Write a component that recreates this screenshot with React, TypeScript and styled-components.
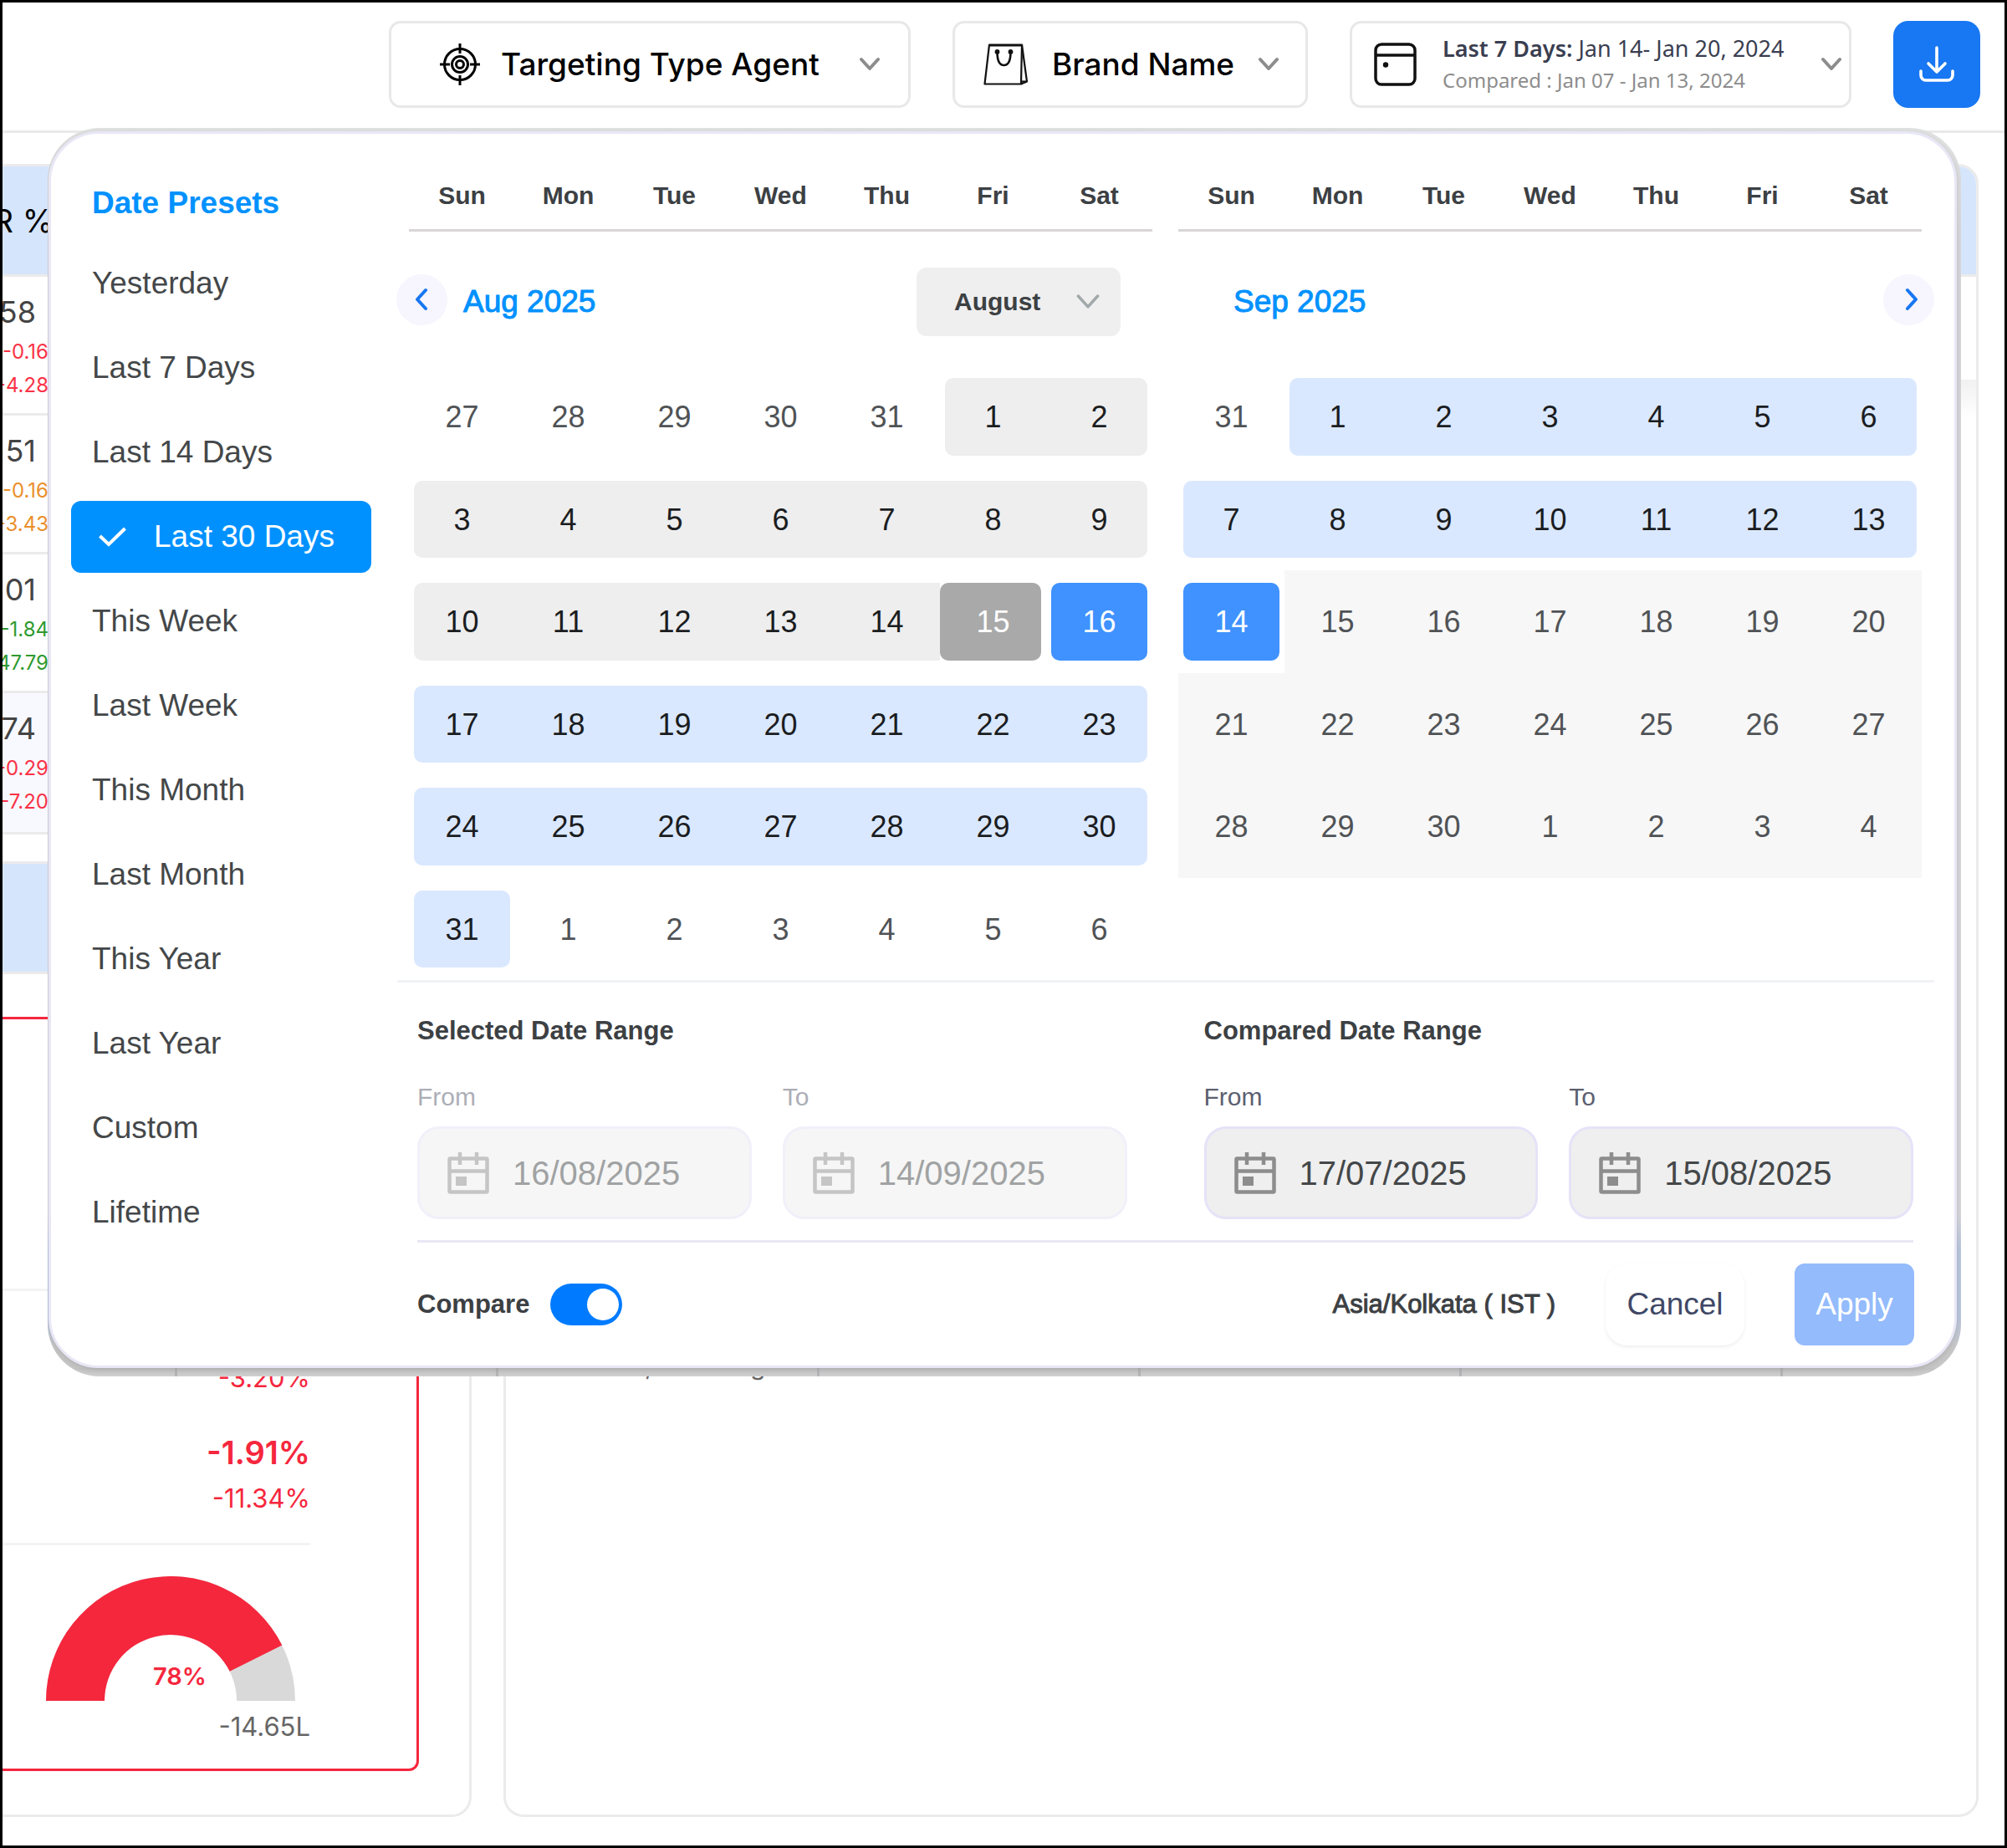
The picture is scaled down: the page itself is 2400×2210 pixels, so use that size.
import React, { useState } from 'react';
import styled, { createGlobalStyle, css } from 'styled-components';

const helvetica = `"Liberation Sans", Arial, sans-serif`;
const inter = `Inter, "Liberation Sans", sans-serif`;
const noto = `"Noto Sans", "Open Sans", sans-serif`;

const GlobalStyle = createGlobalStyle`
  *, *::before, *::after { box-sizing: border-box; }
  body { margin: 0; background: #fff; font-family: ${inter}; }
  button, input, select { font: inherit; color: inherit; margin: 0; padding: 0; border: 0; background: none; }
  button, select, input { outline-offset: 2px; }
  h2, h3, p, ul { margin: 0; padding: 0; list-style: none; }
  svg { display: block; flex: none; }
`;

const Page = styled.div`
  position: relative;
  display: flex;
  flex-direction: column;
  min-height: 100vh;
  border: 3px solid #000;
  background: #fff;
  overflow: hidden;
`;

/* ---------- top bar ---------- */

const TopBar = styled.header`
  display: flex;
  justify-content: flex-end;
  gap: 50px;
  padding: 22px 29px 27px;
  border-bottom: 3px solid #e9e9e9;
`;

const Picker = styled.button<{ $width: number; $left: number; $right: number; $gap: number }>`
  display: flex;
  align-items: center;
  gap: ${(p) => p.$gap}px;
  width: ${(p) => p.$width}px;
  height: 104px;
  padding: 0 ${(p) => p.$right}px 0 ${(p) => p.$left}px;
  border: 3px solid #e8e8e8;
  border-radius: 14px;
  background: #fff;
  color: #000;
  font: 500 37px/44px ${inter};
  text-align: left;
  white-space: nowrap;

  > :last-child {
    margin-left: auto;
  }
`;

const PeriodText = styled.span`
  display: flex;
  flex-direction: column;
  gap: 2px;
  font: 400 27px/36px ${noto};
  color: #3a3e50;

  strong {
    font-weight: 600;
  }
  small {
    font-size: 24px;
    color: #8d8d8d;
  }
`;

const DownloadButton = styled.button`
  display: grid;
  place-items: center;
  width: 104px;
  height: 104px;
  border-radius: 18px;
  background: #1877f2;
  color: #fff;
`;

/* ---------- dashboard behind the popup ---------- */

const Dashboard = styled.main`
  flex: 1;
  display: grid;
  grid-template-columns: 561px 1fr;
  gap: 38px;
  padding: 37px 31px 34px 0;
`;

const LeftColumn = styled.div`
  display: flex;
  flex-direction: column;
  gap: 32px;
`;

const Card = styled.section<{ $bleed?: boolean; $grow?: boolean }>`
  display: flex;
  flex-direction: column;
  flex-grow: ${(p) => (p.$grow ? 1 : 0)};
  border: 3px solid #ebebeb;
  border-radius: 24px;
  overflow: hidden;
  ${(p) =>
    p.$bleed &&
    css`
      border-left: 0;
      border-top-left-radius: 0;
      border-bottom-left-radius: 0;
    `}
`;

const CardHead = styled.div`
  display: flex;
  align-items: center;
  height: 132px;
  background: #d5e5fc;
  border-bottom: 3px solid #ebebeb;
  font: 400 38px/44px ${inter};
  color: #000;
`;

const HeadLabel = styled.span`
  display: flex;
  justify-content: flex-end;
  width: 61px;
  white-space: nowrap;
`;

const MetricRow = styled.div<{ $shade?: boolean }>`
  height: 166px;
  padding-top: 20px;
  background: ${(p) => (p.$shade ? '#f8f9ff' : '#fff')};
  border-bottom: 3px solid #ebebeb;

  &:last-child {
    border-bottom: 0;
  }
`;

const Metric = styled.div<{ $tone: string }>`
  display: flex;
  flex-direction: column;
  align-items: flex-end;
  width: 55px;
  font: 400 24px/40px ${inter};
  color: ${(p) => p.$tone};

  strong {
    margin-bottom: 6px;
    padding-right: 15px;
    font-weight: 400;
    font-size: 36px;
    line-height: 44px;
    color: #444;
  }
`;

const AlertBox = styled.div`
  flex: 1;
  display: flex;
  flex-direction: column;
  justify-content: flex-end;
  align-items: flex-end;
  margin: 51px 60px 52px 0;
  padding: 0 127px 30px 0;
  border: 3px solid #f5273d;
  border-left: 0;
  border-radius: 0 12px 12px 0;
`;

const Rule = styled.hr<{ $top?: number }>`
  align-self: stretch;
  margin: ${(p) => p.$top ?? 0}px 0 0;
  border: 0;
  border-top: 3px solid #f3f3f3;
`;

const Change = styled.p<{ $size: number; $weight?: number; $tone?: string; $top: number }>`
  margin-top: ${(p) => p.$top}px;
  font: ${(p) => p.$weight ?? 400} ${(p) => p.$size}px/40px ${inter};
  color: ${(p) => p.$tone ?? '#f5273d'};
`;

const GaugeWrap = styled.div`
  margin: 37px 18px 0 0;
`;

const SectionShade = styled.div`
  height: 46px;
  margin-top: 123px;
  background: linear-gradient(#f1f1f1, #fff);
`;

const CardNote = styled.p`
  margin-top: 1113px;
  padding-left: 166px;
  font: 400 30px/40px ${inter};
  color: #666;
`;

/* ---------- popup ---------- */

const Popup = styled.div`
  position: absolute;
  top: 150px;
  left: 54px;
  right: 52px;
  padding: 4px 5px 10px 1px;
  border-radius: 62px;
  overflow: hidden;
  background:
    linear-gradient(90deg, transparent 152px, #b5b5b8 152px, #b5b5b8 155px, transparent 155px) 0 100% / 384px 10px
      repeat-x,
    linear-gradient(#c2c2c2, #cfcfcf) 0 100% / 100% 10px no-repeat,
    linear-gradient(#e0e1e1, #d6d6da 140px, #d6d6da 1300px, #b9c6dd 1340px, #b9c6dd 1420px, #c6c6c6 1460px);
`;

const Panel = styled.div`
  display: flex;
  gap: 31px;
  padding: 0 24px 24px 24px;
  border: 3px solid #e9e7f6;
  border-radius: 60px;
  background: #fff;
  box-shadow: 0 2px 6px rgba(0, 0, 0, 0.12);
  font-family: ${helvetica};
  color: #444749;
`;

const Presets = styled.nav`
  width: 359px;
  flex: none;
  padding-top: 61px;

  h2 {
    padding-left: 25px;
    margin-bottom: 31px;
    font-size: 37px;
    line-height: 44px;
    font-weight: 700;
    color: #0091ff;
  }
  ul {
    display: flex;
    flex-direction: column;
    gap: 15px;
  }
`;

const PresetButton = styled.button<{ $active: boolean }>`
  display: flex;
  align-items: center;
  gap: 33px;
  width: 100%;
  height: 86px;
  padding-left: ${(p) => (p.$active ? 33 : 25)}px;
  border-radius: 12px;
  background: ${(p) => (p.$active ? '#0091ff' : 'transparent')};
  color: ${(p) => (p.$active ? '#fff' : '#444749')};
  font-size: 37px;
  line-height: 44px;
`;

const Content = styled.div`
  flex: 1;
  min-width: 0;
`;

const Months = styled.div`
  display: flex;
  gap: 31px;
  padding: 0 15px 0 14px;
  border-bottom: 3px solid #f1f2f7;
`;

const Month = styled.section`
  flex: 1;
`;

const Weekdays = styled.div`
  display: grid;
  grid-template-columns: repeat(7, 1fr);
  padding: 54px 0 20px;
  border-bottom: 3px solid #d9d6d8;
  font-size: 30px;
  line-height: 40px;
  font-weight: 700;
  text-align: center;
  color: #3c4043;
`;

const MonthBar = styled.div<{ $lead: number; $trail: number }>`
  display: flex;
  align-items: center;
  gap: 19px;
  height: 160px;
  margin: 0 -15px;
  padding: 8px ${(p) => p.$trail}px 0 ${(p) => p.$lead}px;

  h3 {
    font-size: 37px;
    line-height: 44px;
    font-weight: 400;
    color: #0091ff;
    -webkit-text-stroke: 1px #0091ff;
  }
  > :last-child {
    margin-left: auto;
  }
`;

const RoundButton = styled.button`
  display: grid;
  place-items: center;
  width: 61px;
  height: 61px;
  margin-bottom: 6px;
  border-radius: 50%;
  background: #f7f5fd;
  color: #1877f2;
`;

const SelectWrap = styled.label`
  display: grid;
  align-items: center;

  > * {
    grid-area: 1 / 1;
  }
  svg {
    justify-self: end;
    margin-right: 25px;
    pointer-events: none;
  }
`;

const MonthSelect = styled.select`
  appearance: none;
  width: 244px;
  height: 82px;
  padding-left: 45px;
  border-radius: 12px;
  background: #efefef;
  color: #3c4043;
  font: 700 30px/40px ${helvetica};
`;

const DayGrid = styled.div`
  display: grid;
  grid-template-columns: repeat(7, 1fr);
  grid-template-rows: repeat(6, 1fr);
  height: 735px;
`;

type Tone = 'plain' | 'muted' | 'compare' | 'compareEnd' | 'range' | 'edge';

const DayCell = styled.div<{ $muted: boolean }>`
  display: flex;
  padding: 15px 0;
  background: ${(p) => (p.$muted ? '#f7f7f7' : 'transparent')};
`;

const toneColor: Record<Tone, string> = {
  plain: 'transparent',
  muted: 'transparent',
  compare: '#eeeeee',
  compareEnd: '#a9a9a9',
  range: '#dae8ff',
  edge: '#3f92ff',
};

const DayButton = styled.button<{ $tone: Tone; $start: boolean; $end: boolean }>`
  flex: 1;
  margin-left: ${(p) => (p.$start ? 6 : 0)}px;
  margin-right: ${(p) => (p.$end ? 6 : 0)}px;
  padding-top: 2px;
  padding-left: ${(p) => (p.$end && !p.$start ? 6 : 0)}px;
  padding-right: ${(p) => (p.$start && !p.$end ? 6 : 0)}px;
  border-radius: ${(p) => {
    const l = p.$start || p.$tone === 'compareEnd' ? 10 : 0;
    const r = p.$end ? 10 : 0;
    return `${l}px ${r}px ${r}px ${l}px`;
  }};
  background: ${(p) => toneColor[p.$tone]};
  color: ${(p) =>
    p.$tone === 'edge' || p.$tone === 'compareEnd'
      ? '#fff'
      : p.$tone === 'compare' || p.$tone === 'range'
        ? '#1b1d1f'
        : '#505356'};
  font-size: 36px;
  line-height: 44px;
`;

const Ranges = styled.div`
  display: flex;
  gap: 92px;
  margin: 0 25px 0 24px;
  padding: 38px 0 25px;
  border-bottom: 3px solid #e8e7f5;
`;

const RangeGroup = styled.fieldset<{ $disabled?: boolean }>`
  flex: 1;
  min-width: 0;
  margin: 0;
  padding: 0;
  border: 0;

  h3 {
    margin-bottom: 41px;
    font-size: 31px;
    line-height: 40px;
    font-weight: 700;
    color: #3c4043;
  }
  > div {
    display: grid;
    grid-template-columns: 400fr 412fr;
    gap: 37px;
    opacity: ${(p) => (p.$disabled ? 0.5 : 1)};
  }
`;

const Field = styled.label`
  display: flex;
  flex-direction: column;
  gap: 17px;
  min-width: 0;
  font-size: 30px;
  line-height: 36px;
  color: #5c6070;
`;

const DateBox = styled.span`
  display: flex;
  align-items: center;
  gap: 28px;
  height: 111px;
  padding: 0 24px 0 33px;
  border: 3px solid #e5e3f7;
  border-radius: 26px;
  background: #efefef;
  color: #8d8d8d;

  input {
    flex: 1;
    min-width: 0;
    font-size: 40px;
    line-height: 44px;
    color: #444749;
  }
`;

const Footer = styled.div`
  display: flex;
  align-items: center;
  gap: 60px;
  height: 123px;
  margin: 0 24px;
  padding-top: 25px;
`;

const CompareLabel = styled.label`
  display: flex;
  align-items: center;
  gap: 25px;
  margin-right: auto;
  font-size: 31px;
  line-height: 40px;
  font-weight: 700;
  color: #3c4043;
`;

const Toggle = styled.input`
  appearance: none;
  display: flex;
  align-items: center;
  width: 86px;
  height: 50px;
  padding: 0 4px;
  border-radius: 25px;
  background: #c8c8c8;

  &::before {
    content: '';
    width: 38px;
    height: 38px;
    border-radius: 50%;
    background: #fff;
  }
  &:checked {
    justify-content: flex-end;
    background: #007bff;
  }
`;

const Zone = styled.span`
  font-size: 31px;
  line-height: 40px;
  color: #3c4043;
  -webkit-text-stroke: 1px #3c4043;
`;

const ActionButton = styled.button<{ $primary?: boolean }>`
  width: ${(p) => (p.$primary ? 143 : 166)}px;
  height: 98px;
  border-radius: ${(p) => (p.$primary ? 12 : 26)}px;
  background: ${(p) => (p.$primary ? '#94bbfc' : '#fff')};
  color: ${(p) => (p.$primary ? '#fff' : '#3f4866')};
  box-shadow: ${(p) => (p.$primary ? 'none' : '0 2px 4px rgba(0, 0, 0, 0.07)')};
  font-size: 37px;
  line-height: 44px;
`;

/* ---------- icons ---------- */

const Chevron = ({ size = 24, color = '#8c8c8c', stroke = 4 }: { size?: number; color?: string; stroke?: number }) => (
  <svg width={size} height={size} viewBox="0 0 24 24" fill="none" stroke={color} strokeWidth={stroke} strokeLinecap="round" strokeLinejoin="round" aria-hidden="true">
    <path d="M2 6 12 17 22 6" />
  </svg>
);

const TargetIcon = () => (
  <svg width="48" height="50" viewBox="0 0 48 50" fill="none" stroke="#000" strokeWidth="3" aria-hidden="true">
    <circle cx="24" cy="25" r="18.5" />
    <circle cx="24" cy="25" r="9.5" />
    <circle cx="24" cy="25" r="4.5" />
    <path d="M24 0v12M24 38v12M0 25h12M36 25h12" />
  </svg>
);

const BagIcon = () => (
  <svg width="53" height="50" viewBox="0 0 53 50" fill="none" stroke="#111" strokeWidth="2.2" strokeLinejoin="round" aria-hidden="true">
    <path d="M7 1.5h39L45 48.5H1.5Z" />
    <path d="M46 1.5 52 45.5 45 48.5M7 2.5h38" />
    <path d="M45 45.5h6" />
    <path d="M16.500 10c0 10 2 16 8 16s8-6 8-16" strokeWidth="2.6" />
    <circle cx="16.5" cy="10" r="1.8" fill="#111" />
    <circle cx="32.5" cy="10" r="1.8" fill="#111" />
  </svg>
);

const PeriodIcon = () => (
  <svg width="51" height="52" viewBox="0 0 51 52" fill="none" stroke="#111" strokeWidth="3.5" aria-hidden="true">
    <rect x="2" y="2" width="47" height="48" rx="7" />
    <path d="M2 15h47" />
    <circle cx="14" cy="26.5" r="3.2" fill="#111" stroke="none" />
  </svg>
);

const DownloadIcon = () => (
  <svg width="42" height="44" viewBox="0 0 42 44" fill="none" stroke="#fff" strokeWidth="3.6" strokeLinecap="round" strokeLinejoin="round" aria-hidden="true">
    <path d="M21 2v29M11 21l10 10 10-10" />
    <path d="M2 30v5a6 6 0 0 0 6 6h26a6 6 0 0 0 6-6v-5" />
  </svg>
);

const CheckIcon = () => (
  <svg width="33" height="24" viewBox="0 0 33 24" fill="none" stroke="#fff" strokeWidth="4" aria-hidden="true">
    <path d="M1.5 11 12 21 31.5 2" />
  </svg>
);

const AngleIcon = ({ next }: { next?: boolean }) => (
  <svg width="22" height="28" viewBox="0 0 22 28" fill="none" stroke="#1877f2" strokeWidth="4" strokeLinecap="round" strokeLinejoin="round" aria-hidden="true">
    <path d={next ? 'M9 3l10 11L9 25' : 'M15 3 5 14l10 11'} />
  </svg>
);

const CalendarIcon = () => (
  <svg width="50" height="50" viewBox="0 0 50 50" fill="none" stroke="currentColor" strokeWidth="4.5" aria-hidden="true">
    <rect x="2.5" y="7.5" width="45" height="40" rx="1" />
    <path d="M2.5 22.5h45M15 0v15M35 0v15" />
    <rect x="10" y="29" width="13" height="11" fill="currentColor" stroke="none" />
  </svg>
);

const Gauge = () => (
  <svg width="298" height="149" viewBox="0 0 298 149" role="img" aria-label="78%">
    <path d="M0 149A149 149 0 0 1 298 149H228A79 79 0 0 0 70 149Z" fill="#d9d9d9" />
    <path d="M0 149A149 149 0 0 1 282.3 82.5L219.7 113.8A79 79 0 0 0 70 149Z" fill="#f5273d" />
    <text x="160" y="130" textAnchor="middle" fill="#f5273d" fontFamily={inter} fontSize="29" fontWeight="600">
      78%
    </text>
  </svg>
);

/* ---------- data ---------- */

const presets = [
  'Yesterday', 'Last 7 Days', 'Last 14 Days', 'Last 30 Days', 'This Week', 'Last Week',
  'This Month', 'Last Month', 'This Year', 'Last Year', 'Custom', 'Lifetime',
];

const weekdays = ['Sun', 'Mon', 'Tue', 'Wed', 'Thu', 'Fri', 'Sat'];
const red = '#fa3246';

const metrics = [
  { value: '58', deltas: ['-0.16', '-4.28'], tone: red },
  { value: '51', deltas: ['-0.16', '-3.43'], tone: '#ea8f2c' },
  { value: '01', deltas: ['-1.84', '47.79'], tone: '#2f9a2f' },
  { value: '74', deltas: ['-0.29', '-7.20'], tone: red, shade: true },
];

interface Day {
  n: number;
  tone: Tone;
}

const run = (from: number, to: number, tone: Tone): Day[] =>
  Array.from({ length: to - from + 1 }, (_, i) => ({ n: from + i, tone }));

const august: Day[] = [
  ...run(27, 31, 'plain'),
  ...run(1, 14, 'compare'),
  ...run(15, 15, 'compareEnd'),
  ...run(16, 16, 'edge'),
  ...run(17, 31, 'range'),
  ...run(1, 6, 'plain'),
];

const september: Day[] = [
  ...run(31, 31, 'plain'),
  ...run(1, 13, 'range'),
  ...run(14, 14, 'edge'),
  ...run(15, 30, 'muted'),
  ...run(1, 4, 'muted'),
];

const family = (tone?: Tone) => (tone === 'compareEnd' ? 'compare' : tone);

const Days = ({ days }: { days: Day[] }) => (
  <DayGrid>
    {days.map((day, i) => {
      const col = i % 7;
      const start = col === 0 || family(days[i - 1]?.tone) !== family(day.tone);
      const end = col === 6 || family(days[i + 1]?.tone) !== family(day.tone);
      return (
        <DayCell key={i} $muted={day.tone === 'muted'}>
          <DayButton type="button" $tone={day.tone} $start={start} $end={end}>
            {day.n}
          </DayButton>
        </DayCell>
      );
    })}
  </DayGrid>
);

const WeekdayRow = () => (
  <Weekdays>
    {weekdays.map((d) => (
      <span key={d}>{d}</span>
    ))}
  </Weekdays>
);

const DateField = ({ label, value, disabled }: { label: string; value: string; disabled?: boolean }) => (
  <Field>
    {label}
    <DateBox>
      <CalendarIcon />
      <input type="text" defaultValue={value} readOnly={disabled} />
    </DateBox>
  </Field>
);

export default function App() {
  const [active, setActive] = useState('Last 30 Days');
  const [compare, setCompare] = useState(true);

  return (
    <Page>
      <GlobalStyle />
      <TopBar>
        <Picker type="button" $width={624} $left={58} $right={34} $gap={25}>
          <TargetIcon />
          Targeting Type Agent
          <Chevron />
        </Picker>
        <Picker type="button" $width={425} $left={34} $right={33} $gap={29}>
          <BagIcon />
          Brand Name
          <Chevron />
        </Picker>
        <Picker type="button" $width={600} $left={26} $right={9} $gap={31}>
          <PeriodIcon />
          <PeriodText>
            <span>
              <strong>Last 7 Days:</strong> Jan 14- Jan 20, 2024
            </span>
            <small>Compared : Jan 07 - Jan 13, 2024</small>
          </PeriodText>
          <Chevron />
        </Picker>
        <DownloadButton type="button" aria-label="Download">
          <DownloadIcon />
        </DownloadButton>
      </TopBar>

      <Dashboard>
        <LeftColumn>
          <Card $bleed>
            <CardHead>
              <HeadLabel>R %</HeadLabel>
            </CardHead>
            {metrics.map((m) => (
              <MetricRow key={m.value} $shade={m.shade}>
                <Metric $tone={m.tone}>
                  <strong>{m.value}</strong>
                  {m.deltas.map((d) => (
                    <span key={d}>{d}</span>
                  ))}
                </Metric>
              </MetricRow>
            ))}
          </Card>
          <Card $bleed $grow>
            <CardHead />
            <AlertBox>
              <Rule />
              <Change $size={31} $top={84}>-3.20%</Change>
              <Change $size={38} $weight={600} $top={49}>-1.91%</Change>
              <Change $size={31} $top={15}>-11.34%</Change>
              <Rule $top={33} />
              <GaugeWrap>
                <Gauge />
              </GaugeWrap>
              <Change $size={31} $top={11} $tone="#666">-14.65L</Change>
            </AlertBox>
          </Card>
        </LeftColumn>
        <Card $grow>
          <CardHead />
          <SectionShade />
          <CardNote>, Branding</CardNote>
        </Card>
      </Dashboard>

      <Popup role="dialog" aria-label="Date range">
        <Panel>
          <Presets>
            <h2>Date Presets</h2>
            <ul>
              {presets.map((p) => (
                <li key={p}>
                  <PresetButton type="button" $active={p === active} onClick={() => setActive(p)}>
                    {p === active && <CheckIcon />}
                    {p}
                  </PresetButton>
                </li>
              ))}
            </ul>
          </Presets>

          <Content>
            <Months>
              <Month>
                <WeekdayRow />
                <MonthBar $lead={0} $trail={53}>
                  <RoundButton type="button" aria-label="Previous month">
                    <AngleIcon />
                  </RoundButton>
                  <h3>Aug 2025</h3>
                  <SelectWrap>
                    <MonthSelect defaultValue="August" aria-label="Month">
                      <option>August</option>
                      <option>September</option>
                    </MonthSelect>
                    <Chevron size={28} color="#a3a8ab" stroke={3} />
                  </SelectWrap>
                </MonthBar>
                <Days days={august} />
              </Month>
              <Month>
                <WeekdayRow />
                <MonthBar $lead={81} $trail={0}>
                  <h3>Sep 2025</h3>
                  <RoundButton type="button" aria-label="Next month">
                    <AngleIcon next />
                  </RoundButton>
                </MonthBar>
                <Days days={september} />
              </Month>
            </Months>

            <Ranges>
              <RangeGroup $disabled>
                <h3>Selected Date Range</h3>
                <div>
                  <DateField label="From" value="16/08/2025" disabled />
                  <DateField label="To" value="14/09/2025" disabled />
                </div>
              </RangeGroup>
              <RangeGroup>
                <h3>Compared Date Range</h3>
                <div>
                  <DateField label="From" value="17/07/2025" />
                  <DateField label="To" value="15/08/2025" />
                </div>
              </RangeGroup>
            </Ranges>

            <Footer>
              <CompareLabel>
                Compare
                <Toggle type="checkbox" role="switch" checked={compare} onChange={(e) => setCompare(e.target.checked)} />
              </CompareLabel>
              <Zone>Asia/Kolkata ( IST )</Zone>
              <ActionButton type="button">Cancel</ActionButton>
              <ActionButton type="button" $primary>
                Apply
              </ActionButton>
            </Footer>
          </Content>
        </Panel>
      </Popup>
    </Page>
  );
}
